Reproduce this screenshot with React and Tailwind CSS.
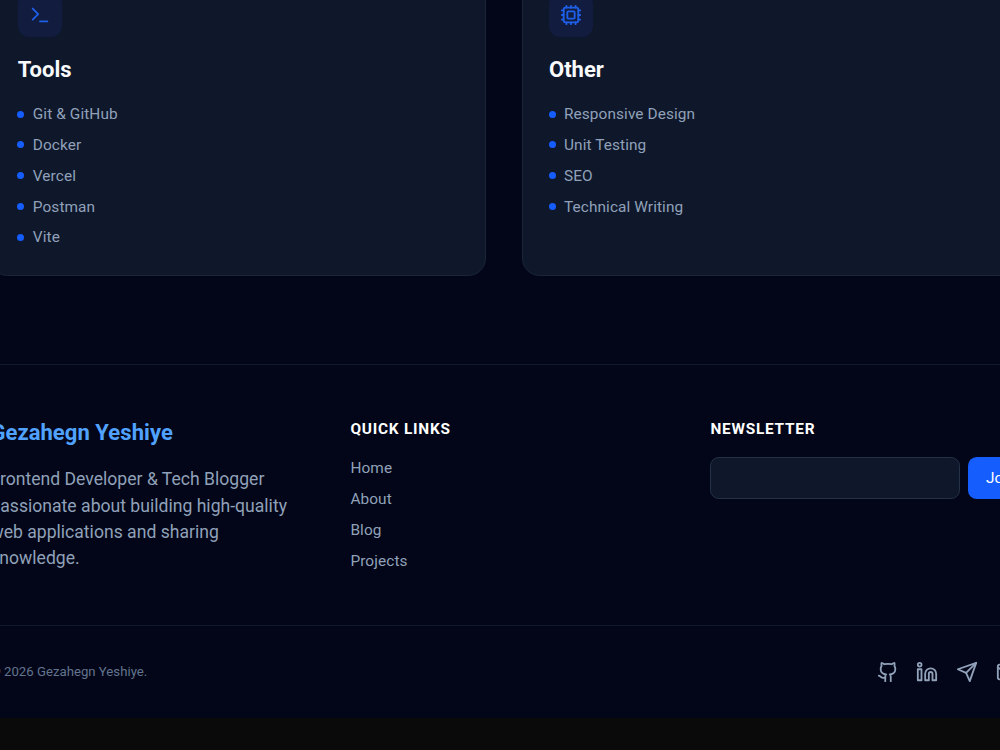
import { Cpu, Github, Linkedin, Mail, Terminal } from "lucide-react";
import { FiSend } from "react-icons/fi";

const skills = [
  { title: "Tools", Icon: Terminal, items: ["Git & GitHub", "Docker", "Vercel", "Postman", "Vite"] },
  { title: "Other", Icon: Cpu, items: ["Responsive Design", "Unit Testing", "SEO", "Technical Writing"] },
];

const links = ["Home", "About", "Blog", "Projects"];
const socials = [Github, Linkedin, FiSend, Mail];

function SkillCard({ title, Icon, items }) {
  return (
    <div className="rounded-[17.6px] border border-[#1a2538] bg-[#0f172b] p-[26.4px]">
      <div className="flex size-[44px] items-center justify-center rounded-[11px] bg-[#111c3f] text-[#1f5fe8]">
        <Icon size={22} />
      </div>
      <h3 className="mt-[17.6px] text-[22px] leading-[30.8px] font-bold text-slate-50">{title}</h3>
      <ul className="mt-[17.8px] flex flex-col gap-[8.8px]">
        {items.map((item) => (
          <li
            key={item}
            className="-ml-[0.4px] flex items-center gap-[8.4px] text-[15.4px] leading-[22px] tracking-[0.09px] text-slate-400"
          >
            <span className="size-[7px] rounded-full bg-[#155dfc]" />
            {item}
          </li>
        ))}
      </ul>
    </div>
  );
}

export default function App() {
  return (
    <div className="h-[750px] w-[1000px] overflow-hidden bg-[#0a0a0a] font-['Roboto',sans-serif]">
      <div className="-mt-[34.4px] bg-slate-950">
        <section className="-ml-[9.6px] grid w-[1027.2px] grid-cols-2 gap-[35.2px] pb-[87.8px]">
          {skills.map((s) => (
            <SkillCard key={s.title} {...s} />
          ))}
        </section>
        <footer className="border-t border-[#121b2e]">
          <div className="-ml-[9.6px] grid w-[1027.2px] grid-cols-3 gap-[52.8px] pt-[53.2px] pb-[52.8px]">
            <div>
              <h2 className="text-[22px] leading-[30.8px] font-bold tracking-[0.06px] text-[#51a2ff]">Gezahegn Yeshiye</h2>
              <p className="mt-[17.6px] text-[17.6px] leading-[26.4px] text-slate-400">
                Frontend Developer &amp; Tech Blogger
                <br />
                passionate about building high-quality
                <br />
                web applications and sharing
                <br />
                knowledge.
              </p>
            </div>
            <div>
              <h4 className="text-[15.4px] leading-[22px] font-bold tracking-wider text-white uppercase">Quick Links</h4>
              <ul className="mt-[17.6px] flex flex-col gap-[8.8px] text-[15.4px] leading-[22px] tracking-[0.09px] text-slate-400">
                {links.map((l) => (
                  <li key={l}>{l}</li>
                ))}
              </ul>
            </div>
            <div>
              <h4 className="text-[15.4px] leading-[22px] font-bold tracking-wider text-white uppercase">Newsletter</h4>
              <form className="mt-[17.4px] flex gap-[8.8px]">
                <input
                  aria-label="Email"
                  className="h-[41.4px] w-[249.2px] shrink-0 rounded-[8.8px] border border-[#243147] bg-[#0f172b]"
                />
                <button
                  type="button"
                  className="shrink-0 rounded-[8.8px] bg-[#155dfc] px-[17.6px] text-[15.4px] leading-[22px] text-white"
                >
                  Join
                </button>
              </form>
            </div>
          </div>
          <div className="border-t border-[#121b2e] py-[35.2px]">
            <div className="-ml-[9.6px] flex w-[1027.2px] items-center justify-between">
              <p className="text-[13.2px] leading-[17.6px] text-slate-500">© 2026 Gezahegn Yeshiye.</p>
              <div className="flex gap-[17.6px] text-slate-400">
                {socials.map((Icon, i) => (
                  <Icon key={i} size={22} />
                ))}
              </div>
            </div>
          </div>
        </footer>
      </div>
    </div>
  );
}
